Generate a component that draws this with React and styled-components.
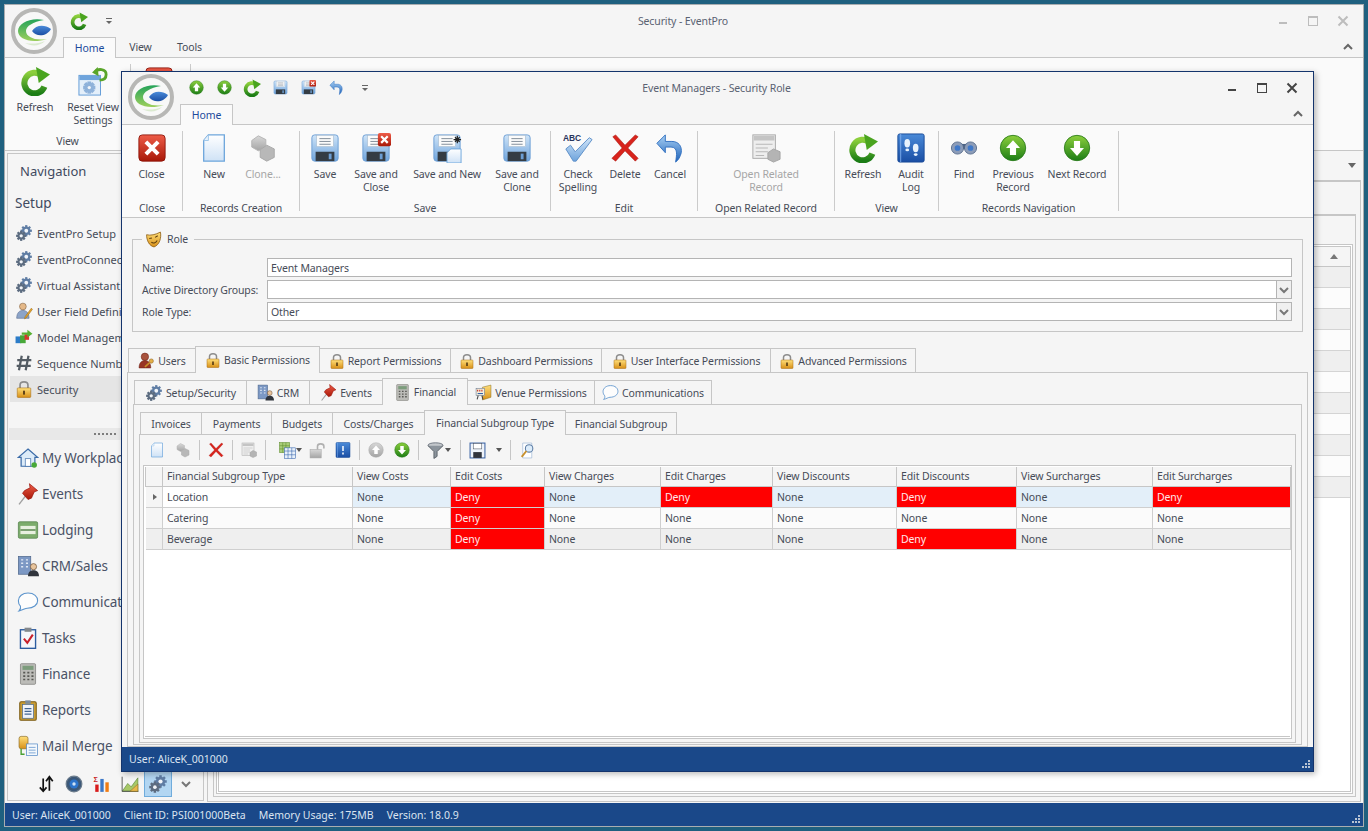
import React from "react";
import styled, { createGlobalStyle } from "styled-components";

const GlobalStyle = createGlobalStyle`
  html, body { margin: 0; padding: 0; height: 100%; overflow: hidden; }
  body { font-family: "Noto Sans", "Liberation Sans", sans-serif; font-size: 10.5px; letter-spacing: -0.12px; color: #474c58; }
  * { box-sizing: border-box; }
`;

/* ---------- icons ---------- */
const IconSvg = styled.svg`
  display: block;
  flex-shrink: 0;
`;

const HiddenDefs = styled.svg`
  position: absolute;
  width: 0;
  height: 0;
`;

const Grad = ({ id, a, b }) => (
  <linearGradient id={id} x1="0" y1="0" x2="0" y2="1">
    <stop offset="0" stopColor={a} />
    <stop offset="1" stopColor={b} />
  </linearGradient>
);

const Defs = () => (
  <HiddenDefs>
    <defs>
      <Grad id="green" a="#8ccf3c" b="#1c7d16" />
      <Grad id="crescent" a="#25a35a" b="#9ccf5c" />
      <Grad id="red" a="#ee5c48" b="#a81808" />
      <Grad id="blue" a="#cfe4f8" b="#6fa4dc" />
      <Grad id="deep" a="#4a8ad8" b="#1a4ea4" />
      <Grad id="undo" a="#a8d0f4" b="#1f62b8" />
      <Grad id="gold" a="#ffdf7a" b="#d89018" />
      <Grad id="gray" a="#d8d8d8" b="#a4a4a4" />
      <Grad id="page" a="#ffffff" b="#cfe2f6" />
    </defs>
  </HiddenDefs>
);

const Ico = ({ s = 16, children }) => (
  <IconSvg width={s} height={s} viewBox="0 0 32 32">{children}</IconSvg>
);

const Logo = () => (
  <IconSvg width="46" height="46" viewBox="0 0 46 46">
    <circle cx="23" cy="23" r="21" fill="#f8f8f8" stroke="#b7b7b5" strokeWidth="4" />
    <path d="M14 35C21 39 29 38 34 33C27 36 20 36 14 35Z" fill="#dbead0" />
    <path d="M33 12C20 9 7 15 7 23C7 31 20 36 36 31C24 33 15 29 15 23C15 18 22 14 33 12Z" fill="url(#crescent)" />
    <path d="M21 23C25 17 33 16 40 21C36 28 26 30 21 23Z" fill="url(#deep)" />
  </IconSvg>
);

const Refresh = ({ s = 30 }) => (
  <Ico s={s}>
    <path d="M23 10A11 11 0 1 0 26 22" fill="none" stroke="url(#green)" strokeWidth="6.500" />
    <path d="M17 1L32 9L20 18Z" fill="#4aa41f" />
  </Ico>
);

const ResetView = () => (
  <Ico s={30}>
    <rect x="1" y="10" width="23" height="21" fill="#e4effa" stroke="#5f9ad6" />
    <rect x="1.500" y="10.500" width="22" height="4.500" fill="#6fa4dc" />
    <Teeth cx={12} cy={23} r={4} c="#8fb2da" />
    <path d="M18 7C21 2 30 3 30 9C30 13 27 15 23 15" fill="none" stroke="#5aa52a" strokeWidth="3" />
    <path d="M21 1L15 7L22 11Z" fill="#5aa52a" />
  </Ico>
);

const RedClose = ({ s = 28 }) => (
  <Ico s={s}>
    <rect x="1" y="1" width="30" height="30" rx="4" fill="url(#red)" stroke="#8c1408" />
    <path d="M9 9L23 23M23 9L9 23" stroke="#fff" strokeWidth="4.600" />
  </Ico>
);

const NewDoc = ({ s = 30 }) => (
  <Ico s={s}>
    <path d="M10 2H27V30H5V8Z" fill="url(#page)" stroke="#6ea6dc" strokeWidth="1.400" />
    <path d="M10 2V8H5" fill="#e8f2fc" stroke="#9cc4e8" />
  </Ico>
);

const Clone = ({ s = 30 }) => (
  <Ico s={s}>
    <path d="M4 8L11 3L19 7V15L11 19L4 15Z" fill="url(#gray)" stroke="#b4b4b4" />
    <path d="M13 18L20 13L28 17V26L20 30L13 26Z" fill="#b8b8b8" stroke="#a8a8a8" />
  </Ico>
);

const Floppy = ({ s = 30, children }) => (
  <Ico s={s}>
    <rect x="2" y="2" width="28" height="28" rx="3" fill="url(#blue)" stroke="#6c9ed4" />
    <rect x="7" y="2.500" width="18" height="12" fill="#fbfbfb" stroke="#a4b8cc" strokeWidth=".6" />
    <path d="M10 6H22M10 9H22M10 12H22" stroke="#7c8894" />
    <rect x="6" y="20" width="20" height="10" fill="#343c44" />
    <rect x="20" y="22" width="3" height="6" fill="#6c9ed4" />
    {children}
  </Ico>
);

const SaveCloseIcon = ({ s = 30 }) => (
  <Floppy s={s}>
    <rect x="18" y="0" width="14" height="14" rx="2" fill="url(#red)" />
    <path d="M21.500 3.500L28.500 10.500M28.500 3.500L21.500 10.500" stroke="#fff" strokeWidth="2.400" />
  </Floppy>
);

const SaveNewIcon = ({ s = 30 }) => (
  <Floppy s={s}>
    <path d="M20 17H31V32H16V21Z" fill="url(#page)" stroke="#6ea6dc" />
    <path d="M27 3V11M23 7H31M24.500 4.500L29.500 9.500M29.500 4.500L24.500 9.500" stroke="#222" strokeWidth="1.300" />
  </Floppy>
);

const Spell = () => (
  <Ico s={30}>
    <text x="0" y="9" fontFamily="Liberation Sans, sans-serif" fontSize="9" fontWeight="700" fill="#28345a">ABC</text>
    <path d="M3 17L8 13L13 20L28 5L31 7L14 30H11Z" fill="url(#blue)" stroke="#5c8ec8" />
  </Ico>
);

const RedX = ({ s = 30 }) => (
  <Ico s={s}>
    <path d="M3 4L6 2L16 13L27 2L30 4L19 16L30 27L27 30L16 19L6 30L2 27L13 16Z" fill="#d8231c" stroke="#a81810" strokeWidth=".6" />
  </Ico>
);

const Undo = ({ s = 30 }) => (
  <Ico s={s}>
    <path d="M11 9H18C25 9 29 14 28 21C27 25 25 29 22 31C23 24 25 15 17 15H11V21L2 11L11 2Z" fill="url(#undo)" stroke="#2f6fc0" />
  </Ico>
);

const RelatedWin = ({ s = 30 }) => (
  <Ico s={s}>
    <rect x="2" y="2" width="24" height="25" fill="#eeeeee" stroke="#a8a8a8" />
    <rect x="3" y="3" width="22" height="5" fill="#c4c4c4" />
    <path d="M5 12H23M5 16H18M5 20H18M5 24H14" stroke="#b4b4b4" />
    <path d="M18 21L24 17L31 20V28L24 31L18 28Z" fill="#b4b4b4" stroke="#a4a4a4" />
  </Ico>
);

const AuditBook = ({ s = 30, mark }) => (
  <Ico s={s}>
    <rect x="2" y="1" width="28" height="30" rx="2" fill="url(#deep)" stroke="#174a98" />
    <path d="M5 1V31" stroke="#7cacec" />
    {mark ? (
      <path d="M16 8V18M16 21V25" stroke="#fff" strokeWidth="3" />
    ) : (
      <g fill="#e8f2fc">
        <ellipse cx="12" cy="11" rx="3" ry="4.500" />
        <ellipse cx="12" cy="18" rx="2" ry="1.500" />
        <ellipse cx="21" cy="16" rx="3" ry="4.500" />
        <ellipse cx="21" cy="23" rx="2" ry="1.500" />
      </g>
    )}
  </Ico>
);

const Binoculars = () => (
  <Ico s={26}>
    <rect x="11" y="11" width="10" height="6" fill="#4c6284" />
    <circle cx="8" cy="16" r="7.500" fill="#8c9cb8" stroke="#4c6284" />
    <circle cx="24" cy="16" r="7.500" fill="#8c9cb8" stroke="#4c6284" />
    <circle cx="8" cy="16" r="3.500" fill="#3f78c8" />
    <circle cx="24" cy="16" r="3.500" fill="#3f78c8" />
  </Ico>
);

const ArrowBall = ({ s = 28, down, off }) => (
  <Ico s={s}>
    <circle cx="16" cy="16" r="14.500" fill={off ? "url(#gray)" : "url(#green)"} stroke={off ? "#aaa" : "#2a7c1a"} />
    <path
      d={down ? "M16 25L24 16H19.500V8H12.500V16H8Z" : "M16 7L24 16H19.500V24H12.500V16H8Z"}
      fill="#fff"
    />
  </Ico>
);

const Mask = () => (
  <Ico s={17}>
    <path d="M3 7C10 9 20 7 29 2C31 12 28 26 17 30C8 28 3 18 3 7Z" fill="url(#gold)" stroke="#8c5c14" strokeWidth="1.500" />
    <path d="M8 14L13 13M19 12L24 9M12 21C15 24 20 23 23 18" fill="none" stroke="#5c3c0c" strokeWidth="2" />
  </Ico>
);

const UserKey = ({ s = 17 }) => (
  <Ico s={s}>
    <circle cx="13" cy="9" r="7" fill="#a8523c" stroke="#6c2014" />
    <path d="M2 30C2 20 7 16 13 16C19 16 24 20 24 30Z" fill="#983424" stroke="#6c2014" />
    <circle cx="25" cy="17" r="4" fill="#e4b048" stroke="#8c5c14" />
    <path d="M22 20L13 28" stroke="#c89028" strokeWidth="3" />
  </Ico>
);

const Lock = ({ s = 16 }) => (
  <Ico s={s}>
    <path d="M9 15V9C9 1.500 23 1.500 23 9V15" fill="none" stroke="#8c8c8c" strokeWidth="3" />
    <rect x="4" y="14" width="24" height="17" rx="1.500" fill="url(#gold)" stroke="#a86c14" />
    <rect x="14.500" y="19" width="3" height="7" fill="#483010" />
  </Ico>
);

const Teeth = ({ cx, cy, r, c }) => (
  <g fill={c}>
    {[0, 45, 90, 135, 180, 225, 270, 315].map((a) => (
      <rect key={a} x={cx - 2} y={cy - r - 2.500} width="4" height="5" transform={`rotate(${a} ${cx} ${cy})`} />
    ))}
    <circle cx={cx} cy={cy} r={r} />
    <circle cx={cx} cy={cy} r={r * 0.45} fill="#f2f5f9" />
  </g>
);

const Gear = ({ s = 18 }) => (
  <Ico s={s}>
    <Teeth cx={20} cy={12} r={7.500} c="#5f7da4" />
    <Teeth cx={11} cy={21} r={6.500} c="#5c6c80" />
  </Ico>
);

const Crm = ({ s = 17 }) => (
  <Ico s={s}>
    <rect x="2" y="2" width="18" height="26" fill="#7c98c4" stroke="#4c6488" />
    <path d="M6 7H9M13 7H16M6 12H9M13 12H16M6 17H9M13 17H16" stroke="#dfe8f4" strokeWidth="2" />
    <circle cx="24" cy="17" r="4.500" fill="#e8c49c" stroke="#6c5038" />
    <path d="M16 31C16 24 20 22 24 22C28 22 32 24 32 31Z" fill="#30343c" />
  </Ico>
);

const Pin = ({ s = 17 }) => (
  <Ico s={s}>
    <path d="M3 31L13 18" stroke="#a0a0a0" strokeWidth="2" />
    <path d="M18 1L30 11L25 13L21 22L16 24L8 15L11 11L19 7Z" fill="url(#red)" stroke="#98140c" />
  </Ico>
);

const Calc = ({ s = 17 }) => (
  <Ico s={s}>
    <rect x="5" y="1" width="22" height="30" rx="1.500" fill="#bcbcb8" stroke="#787874" />
    <rect x="8" y="4" width="16" height="6" fill="#7c9c7c" />
    <path d="M9 14H12M15 14H18M21 14H24M9 19H12M15 19H18M21 19H24M9 24H12M15 24H18M21 24H24" stroke="#585854" strokeWidth="2.500" />
  </Ico>
);

const Venue = () => (
  <Ico s={17}>
    <path d="M14 6L30 2V25L14 30Z" fill="url(#gold)" stroke="#8c7428" />
    <rect x="2" y="8" width="16" height="14" fill="#f4f0dc" stroke="#5c6c88" />
    <path d="M5 11V14M9 11V14M13 11V14" stroke="#c8281c" strokeWidth="2" />
    <path d="M5 18H15" stroke="#2c5cac" strokeWidth="2" />
    <path d="M6 22L4 29M13 22L15 29" stroke="#444" strokeWidth="2" />
  </Ico>
);

const Bubble = ({ s = 17 }) => (
  <Ico s={s}>
    <path d="M16 3C25 3 30 8 30 14C30 20 24 25 15 25C12 25 8 28 3 29C5 27 6 25 5 22C3 20 2 17 2 14C2 8 8 3 16 3Z" fill="#fdfdfd" stroke="#5c94cc" strokeWidth="1.600" />
  </Ico>
);

const GridIcon = () => (
  <Ico s={17}>
    <rect x="1" y="1" width="19" height="19" fill="#a8cc78" stroke="#5c8c2c" />
    <path d="M1 7H20M1 13H20M7 1V20M13 1V20" stroke="#5c8c2c" />
    <rect x="10" y="11" width="21" height="20" fill="#e8f0fa" stroke="#2c5ca8" />
    <path d="M10 17H31M10 24H31M17 11V31M24 11V31" stroke="#2c5ca8" />
  </Ico>
);

const Unlock = () => (
  <Ico s={17}>
    <rect x="2" y="14" width="21" height="16" fill="url(#gray)" stroke="#a8a8a8" />
    <path d="M16 14V8C16 2 28 2 28 8V12" fill="none" stroke="#b0b0b0" strokeWidth="3" />
  </Ico>
);

const Funnel = () => (
  <Ico s={17}>
    <ellipse cx="16" cy="6" rx="14" ry="4.500" fill="#c4c8cc" stroke="#5c6470" strokeWidth="1.500" />
    <path d="M2 7L13 18V31L19 27V18L30 7" fill="#8c949c" stroke="#4c545c" strokeWidth="1.500" />
  </Ico>
);

const OutlineFloppy = () => (
  <Ico s={17}>
    <rect x="2" y="2" width="28" height="28" fill="#eef3fa" stroke="#3c64a4" strokeWidth="2" />
    <rect x="8" y="3" width="16" height="10" fill="#fff" stroke="#48505c" />
    <rect x="8" y="19" width="16" height="11" fill="#30343c" />
  </Ico>
);

const DocSearch = () => (
  <Ico s={17}>
    <path d="M7 2H24V30H7Z" fill="#fff" stroke="#84a4cc" />
    <circle cx="19" cy="12" r="7" fill="#dcecfa" stroke="#5c7ca4" strokeWidth="2" />
    <path d="M14 17L5 28" stroke="#c8902c" strokeWidth="3.500" />
  </Ico>
);

const Person = () => (
  <Ico s={18}>
    <circle cx="14" cy="8" r="6" fill="#e4b888" stroke="#7c5c3c" />
    <path d="M3 29C3 19 8 15 14 15C20 15 25 19 25 29Z" fill="#8ca4c8" stroke="#54688c" />
    <path d="M31 13L20 28L17 30L18 26L29 11Z" fill="#e8a428" stroke="#9c6c18" />
  </Ico>
);

const Model = () => (
  <Ico s={18}>
    <rect x="1" y="15" width="10" height="12" fill="#2c7cc8" />
    <rect x="9" y="13" width="10" height="14" fill="#48a838" />
    <rect x="17" y="11" width="8" height="10" fill="#d8342c" />
    <path d="M12 8H22V3L31 10L22 17V12H12Z" fill="#58b030" />
  </Ico>
);

const Hash = () => (
  <Ico s={18}>
    <path d="M12 3L7 29M24 3L19 29M4 11H29M3 21H28" stroke="#545c64" strokeWidth="4" />
  </Ico>
);

const House = () => (
  <Ico s={22}>
    <path d="M16 3L30 15H26V28H6V15H2Z" fill="#dcebf8" stroke="#3c6ca8" strokeWidth="1.800" />
    <rect x="12" y="17" width="8" height="11" fill="#fff" stroke="#3c6ca8" />
    <circle cx="25" cy="26" r="4" fill="#48a838" />
  </Ico>
);

const Bed = () => (
  <Ico s={22}>
    <rect x="2" y="4" width="28" height="24" rx="2" fill="#7cac6c" stroke="#4c7c44" />
    <rect x="5" y="10" width="22" height="12" fill="#e8f0e0" />
    <path d="M5 16H27" stroke="#4c7c44" strokeWidth="2" />
  </Ico>
);

const Tasks = () => (
  <Ico s={22}>
    <rect x="5" y="4" width="22" height="27" fill="#f4f6fa" stroke="#2c5ca0" strokeWidth="2" />
    <rect x="11" y="1" width="10" height="6" fill="#84888c" />
    <path d="M10 17L15 23L23 11" fill="none" stroke="#c8202c" strokeWidth="3" />
  </Ico>
);

const Report = () => (
  <Ico s={22}>
    <rect x="4" y="4" width="24" height="27" rx="2" fill="#c89c34" stroke="#7c5c14" strokeWidth="1.500" />
    <rect x="8" y="8" width="16" height="20" fill="#f0f4fa" stroke="#446894" />
    <rect x="12" y="2" width="8" height="5" fill="#7c8c9c" />
    <path d="M11 14H21M11 18H21M11 22H21" stroke="#446894" strokeWidth="1.500" />
  </Ico>
);

const MailMerge = () => (
  <Ico s={22}>
    <rect x="3" y="2" width="13" height="18" rx="3" fill="url(#gold)" stroke="#8c6c24" />
    <rect x="14" y="13" width="16" height="17" fill="#f4f8fc" stroke="#4c84c4" />
    <path d="M17 18H27M17 22H27M17 26H27" stroke="#4c84c4" />
    <path d="M6 20V28H11" fill="none" stroke="#48a030" strokeWidth="2" />
  </Ico>
);

const Arrows = () => (
  <Ico s={18}>
    <path d="M11 6V28M5 22L11 29L17 22M22 28V5M16 11L22 3L28 11" fill="none" stroke="#111" strokeWidth="3" />
  </Ico>
);

const Orb = () => (
  <Ico s={18}>
    <circle cx="16" cy="16" r="14" fill="#3c5878" stroke="#6c7c8c" strokeWidth="2" />
    <circle cx="16" cy="16" r="8" fill="#2c74cc" />
    <circle cx="16" cy="16" r="3" fill="#cfe2f6" />
  </Ico>
);

const Bars = () => (
  <Ico s={18}>
    <text x="1" y="12" fontFamily="Liberation Sans, sans-serif" fontSize="13" fontWeight="700" fill="#c81c1c">Σ</text>
    <rect x="4" y="17" width="6" height="13" fill="#d81c1c" />
    <rect x="13" y="7" width="6" height="23" fill="#3c78c8" />
    <rect x="22" y="13" width="6" height="17" fill="#f07c14" />
  </Ico>
);

const ChartArea = () => (
  <Ico s={18}>
    <path d="M2 29L12 15L18 21L30 5V29Z" fill="#a8c868" stroke="#4c7c2c" />
    <path d="M2 29V3M2 29H31" stroke="#444" strokeWidth="1.500" />
    <path d="M16 29L30 16V29Z" fill="#e8b84c" stroke="#8c6c24" />
  </Ico>
);

const Chevron = ({ up, c = "#666", s = 10 }) => (
  <IconSvg width={s} height={s} viewBox="0 0 10 10">
    <path d={up ? "M1 7L5 3L9 7" : "M1 3L5 7L9 3"} fill="none" stroke={c} strokeWidth="2" />
  </IconSvg>
);

const WinMin = ({ c }) => (
  <IconSvg width="12" height="12" viewBox="0 0 12 12"><rect x="2" y="7" width="8" height="2" fill={c} /></IconSvg>
);
const WinMax = ({ c }) => (
  <IconSvg width="12" height="12" viewBox="0 0 12 12">
    <rect x="1.500" y="1.500" width="9" height="9" fill="none" stroke={c} />
    <rect x="1" y="1" width="10" height="2" fill={c} />
  </IconSvg>
);
const WinClose = ({ c }) => (
  <IconSvg width="12" height="12" viewBox="0 0 12 12">
    <path d="M1.500 1.500L10.500 10.500M10.500 1.500L1.500 10.500" stroke={c} strokeWidth="2" />
  </IconSvg>
);

const Grip = () => (
  <IconSvg width="9" height="9" viewBox="0 0 9 9">
    <path d="M7 0h2v2H7zM4 3h2v2H4zM7 3h2v2H7zM1 6h2v2H1zM4 6h2v2H4zM7 6h2v2H7z" fill="#b8c4d4" />
  </IconSvg>
);

/* ---------- window chrome ---------- */
const Desktop = styled.div`
  width: 1368px;
  height: 831px;
  padding: 4px;
  background: #1f607f;
`;

const MainWindow = styled.div`
  position: relative;
  display: flex;
  flex-direction: column;
  height: 823px;
  background: #f5f5f5;
  border: 1px solid #a9adb0;
  border-bottom-width: 1px;
`;

const ChildWindow = styled.div`
  position: absolute;
  left: 116px;
  top: 66px;
  width: 1193px;
  height: 701px;
  display: flex;
  flex-direction: column;
  background: #f5f5f5;
  border: 1px solid #14346c;
  box-shadow: 2px 2px 6px rgba(0, 0, 0, 0.28);
`;

const Header = styled.header`
  display: flex;
  height: 53px;
  flex-shrink: 0;
  border-bottom: 1px solid #c6c6c6;
`;

const LogoSlot = styled.div`
  width: ${(p) => p.$w}px;
  padding: ${(p) => p.$top}px 0 0 6px;
  flex-shrink: 0;
`;

const HeaderMain = styled.div`
  flex: 1;
  display: flex;
  flex-direction: column;
  min-width: 0;
`;

const TitleRow = styled.div`
  flex: 1;
  display: flex;
  align-items: center;
`;

const Qat = styled.div`
  display: flex;
  align-items: center;
  width: ${(p) => p.$w}px;
  padding-left: 2px;
`;

const QatCell = styled.div`
  width: 28px;
  display: flex;
  justify-content: center;
`;

const QatDrop = styled.div`
  margin-left: ${(p) => p.$m}px;
  width: 6px;
  height: 6px;
  border-top: 1px solid #666;
  display: flex;
  justify-content: center;
  padding-top: 2px;
  &::after {
    content: "";
    border: 3px solid transparent;
    border-top: 3px solid #666;
    border-bottom: 0;
  }
`;

const Title = styled.div`
  flex: 1;
  text-align: center;
  padding-right: ${(p) => p.$shift}px;
  color: #5a6272;
`;

const WinButtons = styled.div`
  display: flex;
  width: 100px;
  padding-left: ${(p) => p.$pad}px;
  gap: 18px;
`;

const TabRow = styled.div`
  height: 21px;
  display: flex;
  align-items: flex-end;
`;

const RibbonTab = styled.div`
  width: ${(p) => p.$w}px;
  height: 21px;
  margin-bottom: -1px;
  padding-bottom: 1px;
  display: flex;
  align-items: center;
  justify-content: center;
  color: ${(p) => (p.$active ? "#1c4a9c" : "#474c58")};
  background: ${(p) => (p.$active ? "#fafafa" : "transparent")};
  border: 1px solid ${(p) => (p.$active ? "#c6c6c6" : "transparent")};
  border-bottom: ${(p) => (p.$active ? "0" : "1px solid transparent")};
`;

const Collapse = styled.div`
  margin: 0 ${(p) => p.$r}px 5px auto;
`;

const Ribbon = styled.div`
  display: flex;
  height: 93px;
  flex-shrink: 0;
  background: #fafafa;
  padding-top: 6px;
  border-bottom: 1px solid #c6c6c6;
`;

const Group = styled.section`
  width: ${(p) => p.$w}px;
  height: 80px;
  flex-shrink: 0;
  display: flex;
  flex-direction: column;
  padding-left: ${(p) => p.$pad || 0}px;
  border-right: 1px solid #cbcbcb;
`;

const GroupItems = styled.div`
  flex: 1;
  display: flex;
`;

const GroupLabel = styled.div`
  height: 16px;
  margin: 0 0 -5px -${(p) => p.$pad || 0}px;
  text-align: center;
  line-height: 16px;
  color: #474c58;
`;

const BigButton = styled.div`
  width: ${(p) => p.$w}px;
  display: flex;
  flex-direction: column;
  align-items: center;
  color: ${(p) => (p.$off ? "#a6a6a6" : "#474c58")};
`;

const BigIcon = styled.div`
  height: 30px;
  margin-top: 2px;
  display: flex;
  align-items: center;
  justify-content: center;
`;

const BigLabel = styled.div`
  margin-top: 5px;
  line-height: 13px;
  text-align: center;
  white-space: pre-line;
`;

/* ---------- main window body ---------- */
const Body = styled.div`
  flex: 1;
  min-height: 0;
  display: flex;
`;

const Nav = styled.nav`
  width: 197px;
  margin: 2px 0 2px 2px;
  flex-shrink: 0;
  display: flex;
  flex-direction: column;
  border: 1px solid #c6c6c6;
  overflow: hidden;
`;

const NavHead = styled.div`
  height: 33px;
  padding-left: 12px;
  display: flex;
  align-items: center;
  font-size: 13px;
  letter-spacing: 0;
  color: #3f4a60;
`;

const NavSub = styled.div`
  height: 33px;
  padding: 0 0 1px 7px;
  display: flex;
  align-items: center;
  font-size: 13.5px;
  letter-spacing: 0;
  color: #3f4a60;
`;

const NavList = styled.div`
  padding-left: 2px;
`;

const NavRow = styled.div`
  height: 26px;
  display: flex;
  align-items: center;
  gap: 4px;
  padding-left: 5px;
  white-space: nowrap;
  letter-spacing: 0;
  font-size: 11px;
  background: ${(p) => (p.$active ? "#e5e5e5" : "transparent")};
`;

const Splitter = styled.div`
  height: 12px;
  margin: 26px 0 0 1px;
  background: #e8e8e8;
  display: flex;
  align-items: center;
  justify-content: flex-end;
  padding-right: 87px;
  &::after {
    content: "";
    width: 22px;
    border-top: 2px dotted #7c7c7c;
  }
`;

const BigNavRow = styled.div`
  height: 36px;
  display: flex;
  align-items: center;
  gap: 3px;
  padding-left: 9px;
  white-space: nowrap;
  font-size: 13.5px;
  letter-spacing: -0.1px;
  color: #4a5266;
`;

const NavTools = styled.div`
  display: flex;
  align-items: center;
  height: 27px;
  margin-top: 6px;
  padding-left: 24px;
`;

const NavTool = styled.div`
  width: 28px;
  height: 27px;
  display: flex;
  align-items: center;
  justify-content: center;
  background: ${(p) => (p.$active ? "#b2d6f2" : "transparent")};
  border: 1px solid ${(p) => (p.$active ? "#70acdc" : "transparent")};
`;

const Content = styled.main`
  flex: 1;
  min-width: 0;
  display: flex;
  flex-direction: column;
  margin: 0 2px 1px 3px;
`;

const ContentHead = styled.div`
  height: 29px;
  flex-shrink: 0;
  display: flex;
  align-items: center;
  justify-content: flex-end;
  padding-right: 5px;
  &::after {
    content: "";
    border: 4px solid transparent;
    border-top: 5px solid #666;
    border-bottom: 0;
  }
`;

const Frame = styled.div`
  flex: 1;
  min-height: 0;
  display: flex;
  flex-direction: column;
  border: 1px solid #c6c6c6;
  border-top-width: 2px;
  padding: ${(p) => p.$top}px ${(p) => p.$side}px ${(p) => p.$side}px ${(p) => p.$left}px;
  background: #f5f5f5;
`;

const BackGridOuter = styled.div`
  flex: 1;
  padding: 1px;
  background: #fff;
  border: 1px solid #c6c6c6;
`;

const BackGrid = styled.div`
  height: 100%;
  background: #fff;
  border: 1px solid #c6c6c6;
`;

const BackHead = styled.div`
  height: 20px;
  display: flex;
  align-items: center;
  justify-content: flex-end;
  padding-right: 12px;
  background: #f5f5f5;
  border-bottom: 1px solid #c6c6c6;
  &::after {
    content: "";
    border: 4px solid transparent;
    border-bottom: 5px solid #777;
    border-top: 0;
  }
`;

const BackRow = styled.div`
  height: 21px;
  background: ${(p) => (p.$odd ? "#efefef" : "#fcfcfc")};
  border-bottom: 1px solid #d4d4d4;
`;

const StatusBar = styled.footer`
  height: ${(p) => p.$h}px;
  flex-shrink: 0;
  display: flex;
  align-items: center;
  gap: 13px;
  padding: 0 3px 0 7px;
  background: #1a4889;
  color: #dbe4f0;
  letter-spacing: 0;
`;

const GripSlot = styled.div`
  margin: auto 0 2px auto;
`;

/* ---------- child window body ---------- */
const ChildBody = styled.div`
  flex: 1;
  min-height: 0;
  display: flex;
  flex-direction: column;
  padding-top: 13px;
`;

const RoleSet = styled.fieldset`
  margin: 0 10px;
  padding: 11px 10px 10px 9px;
  border: 1px solid #c6c6c6;
  min-width: 0;
`;

const RoleLegend = styled.legend`
  display: flex;
  align-items: center;
  gap: 5px;
  height: 16px;
  padding: 0 6px 0 3px;
`;

const Form = styled.div`
  display: grid;
  grid-template-columns: 125px 1fr;
  row-gap: 3px;
  align-items: center;
`;

const FieldLabel = styled.span`
  white-space: nowrap;
`;

const FieldBox = styled.div`
  height: 19px;
  display: flex;
  align-items: center;
  padding-left: 3px;
  background: #fff;
  border: 1px solid #b4b4b4;
`;

const FieldDrop = styled.div`
  margin-left: auto;
  width: 15px;
  height: 17px;
  display: flex;
  align-items: center;
  justify-content: center;
  background: #f0f0f0;
  border-left: 1px solid #b4b4b4;
`;

const TabStrip = styled.div`
  display: flex;
  align-items: flex-end;
  height: ${(p) => p.$h}px;
  margin-top: ${(p) => p.$top}px;
  padding-left: ${(p) => p.$left}px;
  flex-shrink: 0;
  position: relative;
  z-index: 1;
`;

const PageTab = styled.div`
  width: ${(p) => p.$w}px;
  height: ${(p) => (p.$active ? p.$h : p.$h - 2)}px;
  display: flex;
  align-items: center;
  justify-content: center;
  gap: 3px;
  white-space: nowrap;
  margin-right: -1px;
  background: #f5f5f5;
  border: 1px solid #c6c6c6;
  border-bottom: ${(p) => (p.$active ? "0" : "1px solid #c6c6c6")};
`;

const TabPanel = styled.div`
  flex: 1;
  min-height: 0;
  display: flex;
  flex-direction: column;
  margin: -1px ${(p) => p.$side}px ${(p) => p.$bottom}px;
  border: 1px solid #c6c6c6;
  padding: ${(p) => p.$pad || 0};
`;

const Toolbar = styled.div`
  height: 30px;
  flex-shrink: 0;
  display: flex;
  align-items: center;
  padding-left: 4px;
`;

const ToolCell = styled.div`
  width: ${(p) => p.$w || 26}px;
  padding-left: ${(p) => p.$pad ?? 5}px;
  display: flex;
  align-items: center;
`;

const ToolSep = styled.div`
  width: 1px;
  height: 20px;
  margin: 0 3px;
  background: #c6c6c6;
`;

const Caret = styled.span`
  margin-left: ${(p) => p.$m || 0}px;
  border: 3px solid transparent;
  border-top: 4px solid #555;
  border-bottom: 0;
`;

const GridFrame = styled.div`
  flex: 1;
  min-height: 0;
  margin: 0 3px 3px;
  padding: 1px;
  border: 1px solid #c6c6c6;
  background: #fff;
`;

const GridInner = styled.div`
  height: 100%;
  background: #fff;
  border-bottom: 1px solid #c6c6c6;
`;

const Table = styled.table`
  table-layout: fixed;
  width: 1145px;
  border-collapse: collapse;
  font-size: 10.5px;
`;

const Th = styled.th`
  height: 19px;
  padding: 0 4px;
  font-weight: 400;
  text-align: left;
  color: #474c58;
  background: #f5f5f5;
  border: 1px solid #c6c6c6;
  border-top: 0;
`;

const cellBg = (p) => {
  if (p.$deny) return "#ff0000";
  if (p.$rowIndex === 0) return p.$first ? "#ffffff" : "#e3eff9";
  return p.$rowIndex === 2 ? "#efefef" : "#fbfbfb";
};

const Td = styled.td`
  height: 21px;
  padding: 0 4px;
  color: ${(p) => (p.$deny ? "#ffe8e8" : "#474c58")};
  background: ${cellBg};
  border: 1px solid #cfcfcf;
  white-space: nowrap;
`;

const RowMark = styled.td`
  height: 21px;
  padding-left: 7px;
  background: ${(p) => (p.$rowIndex === 2 ? "#efefef" : "#f5f5f5")};
  border: 1px solid #cfcfcf;
  border-left: 0;
`;

const Triangle = styled.div`
  width: 0;
  border: 3px solid transparent;
  border-left: 4px solid #666;
  border-right: 0;
`;

/* ---------- data ---------- */
const setupItems = [
  [<Gear key="g" />, "EventPro Setup"],
  [<Gear key="g" />, "EventProConnect"],
  [<Gear key="g" />, "Virtual Assistant Setup"],
  [<Person key="g" />, "User Field Definitions"],
  [<Model key="g" />, "Model Management"],
  [<Hash key="g" />, "Sequence Numbers"],
  [<Lock key="g" s={18} />, "Security"],
];

const bigItems = [
  [<House key="i" />, "My Workplace"],
  [<Pin key="i" s={22} />, "Events"],
  [<Bed key="i" />, "Lodging"],
  [<Crm key="i" s={22} />, "CRM/Sales"],
  [<Bubble key="i" s={22} />, "Communications"],
  [<Tasks key="i" />, "Tasks"],
  [<Calc key="i" s={22} />, "Finance"],
  [<Report key="i" />, "Reports"],
  [<MailMerge key="i" />, "Mail Merge"],
];

const ribbonGroups = [
  { label: "Close", w: 61, items: [[59, <RedClose key="i" />, "Close"]] },
  {
    label: "Records Creation", w: 117, pad: 7,
    items: [[48, <NewDoc key="i" />, "New"], [50, <Clone key="i" />, "Clone...", true]],
  },
  {
    label: "Save", w: 251, pad: 5,
    items: [
      [40, <Floppy key="i" />, "Save"],
      [62, <SaveCloseIcon key="i" />, "Save and\nClose"],
      [80, <SaveNewIcon key="i" />, "Save and New"],
      [60, <Floppy key="i" />, "Save and\nClone"],
    ],
  },
  {
    label: "Edit", w: 147,
    items: [[54, <Spell key="i" />, "Check\nSpelling"], [40, <RedX key="i" />, "Delete"], [50, <Undo key="i" />, "Cancel"]],
  },
  { label: "Open Related Record", w: 137, items: [[136, <RelatedWin key="i" />, "Open Related\nRecord", true]] },
  {
    label: "View", w: 104, pad: 5,
    items: [[46, <Refresh key="i" />, "Refresh"], [50, <AuditBook key="i" />, "Audit\nLog"]],
  },
  {
    label: "Records Navigation", w: 180, pad: 5,
    items: [
      [40, <Binoculars key="i" />, "Find"],
      [58, <ArrowBall key="i" />, "Previous\nRecord"],
      [70, <ArrowBall key="i" down />, "Next Record"],
    ],
  },
];

const permTabs = [
  [68, <UserKey key="i" />, "Users"],
  [125, <Lock key="i" />, "Basic Permissions", true],
  [132, <Lock key="i" />, "Report Permissions"],
  [152, <Lock key="i" />, "Dashboard Permissions"],
  [170, <Lock key="i" />, "User Interface Permissions"],
  [146, <Lock key="i" />, "Advanced Permissions"],
];

const areaTabs = [
  [113, <Gear key="i" />, "Setup/Security"],
  [64, <Crm key="i" />, "CRM"],
  [74, <Pin key="i" />, "Events"],
  [86, <Calc key="i" />, "Financial", true],
  [128, <Venue key="i" />, "Venue Permissions"],
  [118, <Bubble key="i" />, "Communications"],
];

const subTabs = [
  [62, "Invoices"],
  [71, "Payments"],
  [62, "Budgets"],
  [93, "Costs/Charges"],
  [142, "Financial Subgroup Type", true],
  [112, "Financial Subgroup"],
];

const columns = [
  ["Financial Subgroup Type", 190],
  ["View Costs", 98],
  ["Edit Costs", 94],
  ["View Charges", 116],
  ["Edit Charges", 112],
  ["View Discounts", 124],
  ["Edit Discounts", 120],
  ["View Surcharges", 136],
  ["Edit Surcharges", 138],
];

const rows = [
  ["Location", "None", "Deny", "None", "Deny", "None", "Deny", "None", "Deny"],
  ["Catering", "None", "Deny", "None", "None", "None", "None", "None", "None"],
  ["Beverage", "None", "Deny", "None", "None", "None", "Deny", "None", "None"],
];

const WindowControls = ({ c, pad }) => (
  <WinButtons $pad={pad}>
    <WinMin c={c} />
    <WinMax c={c} />
    <WinClose c={c} />
  </WinButtons>
);

const Security = () => (
  <ChildWindow>
    <Header>
      <LogoSlot $w={58} $top={2}><Logo /></LogoSlot>
      <HeaderMain>
        <TitleRow>
          <Qat $w={200}>
            <QatCell><ArrowBall s={15} /></QatCell>
            <QatCell><ArrowBall s={15} down /></QatCell>
            <QatCell><Refresh s={18} /></QatCell>
            <QatCell><Floppy s={15} /></QatCell>
            <QatCell><SaveCloseIcon s={15} /></QatCell>
            <QatCell><Undo s={15} /></QatCell>
            <QatDrop $m={12} />
          </Qat>
          <Title $shift={160}>Event Managers - Security Role</Title>
          <WindowControls c="#444" pad={13} />
        </TitleRow>
        <TabRow>
          <RibbonTab $w={53} $active>Home</RibbonTab>
          <Collapse $r={10}><Chevron up /></Collapse>
        </TabRow>
      </HeaderMain>
    </Header>

    <Ribbon>
      {ribbonGroups.map((g) => (
        <Group key={g.label} $w={g.w} $pad={g.pad}>
          <GroupItems>
            {g.items.map(([w, icon, label, off]) => (
              <BigButton key={label} $w={w} $off={off}>
                <BigIcon>{icon}</BigIcon>
                <BigLabel>{label}</BigLabel>
              </BigButton>
            ))}
          </GroupItems>
          <GroupLabel $pad={g.pad}>{g.label}</GroupLabel>
        </Group>
      ))}
    </Ribbon>

    <ChildBody>
      <RoleSet>
        <RoleLegend><Mask />Role</RoleLegend>
        <Form>
          <FieldLabel>Name:</FieldLabel>
          <FieldBox>Event Managers</FieldBox>
          <FieldLabel>Active Directory Groups:</FieldLabel>
          <FieldBox><FieldDrop><Chevron c="#777" /></FieldDrop></FieldBox>
          <FieldLabel>Role Type:</FieldLabel>
          <FieldBox>Other<FieldDrop><Chevron c="#777" /></FieldDrop></FieldBox>
        </Form>
      </RoleSet>

      <TabStrip $h={27} $top={14} $left={6}>
        {permTabs.map(([w, icon, label, active]) => (
          <PageTab key={label} $w={w} $h={27} $active={active}>{icon}{label}</PageTab>
        ))}
      </TabStrip>
      <TabPanel $side={5} $bottom={0} $pad="5px 5px 0">
        <TabStrip $h={27} $top={0} $left={1}>
          {areaTabs.map(([w, icon, label, active]) => (
            <PageTab key={label} $w={w} $h={27} $active={active}>{icon}{label}</PageTab>
          ))}
        </TabStrip>
        <TabPanel $side={0} $bottom={1} $pad="5px 5px 0">
          <TabStrip $h={25} $top={0} $left={1}>
            {subTabs.map(([w, label, active]) => (
              <PageTab key={label} $w={w} $h={25} $active={active}>{label}</PageTab>
            ))}
          </TabStrip>
          <TabPanel $side={0} $bottom={1}>
            <Toolbar>
              <ToolCell><NewDoc s={16} /></ToolCell>
              <ToolCell><Clone s={16} /></ToolCell>
              <ToolSep />
              <ToolCell><RedX s={16} /></ToolCell>
              <ToolSep />
              <ToolCell><RelatedWin s={16} /></ToolCell>
              <ToolSep />
              <ToolCell $w={35} $pad={10}><GridIcon /><Caret /></ToolCell>
              <ToolCell><Unlock /></ToolCell>
              <ToolCell><AuditBook s={16} mark /></ToolCell>
              <ToolSep />
              <ToolCell><ArrowBall s={16} off /></ToolCell>
              <ToolCell><ArrowBall s={16} down /></ToolCell>
              <ToolSep />
              <ToolCell $w={35}><Funnel /><Caret $m={1} /></ToolCell>
              <ToolSep />
              <ToolCell $w={43}><OutlineFloppy /><Caret $m={10} /></ToolCell>
              <ToolSep />
              <ToolCell><DocSearch /></ToolCell>
            </Toolbar>
            <GridFrame>
              <GridInner>
                <Table>
                  <colgroup>
                    <col width="17" />
                    {columns.map(([name, w]) => <col key={name} width={w} />)}
                  </colgroup>
                  <thead>
                    <tr>
                      <Th />
                      {columns.map(([name]) => <Th key={name}>{name}</Th>)}
                    </tr>
                  </thead>
                  <tbody>
                    {rows.map((row, i) => (
                      <tr key={row[0]}>
                        <RowMark $rowIndex={i}>{i === 0 && <Triangle />}</RowMark>
                        {row.map((value, j) => (
                          <Td key={columns[j][0]} $rowIndex={i} $first={j === 0} $deny={value === "Deny"}>{value}</Td>
                        ))}
                      </tr>
                    ))}
                  </tbody>
                </Table>
              </GridInner>
            </GridFrame>
          </TabPanel>
        </TabPanel>
      </TabPanel>
    </ChildBody>

    <StatusBar $h={24}>
      User: AliceK_001000
      <GripSlot><Grip /></GripSlot>
    </StatusBar>
  </ChildWindow>
);

export default function App() {
  return (
    <Desktop>
      <GlobalStyle />
      <Defs />
      <MainWindow>
        <Header>
          <LogoSlot $w={58} $top={3}><Logo /></LogoSlot>
          <HeaderMain>
            <TitleRow>
              <Qat $w={60}>
                <QatCell><Refresh s={18} /></QatCell>
                <QatDrop $m={13} />
              </Qat>
              <Title $shift={20}>Security - EventPro</Title>
              <WindowControls c="#bdbdbd" pad={14} />
            </TitleRow>
            <TabRow>
              <RibbonTab $w={53} $active>Home</RibbonTab>
              <RibbonTab $w={49}>View</RibbonTab>
              <RibbonTab $w={49}>Tools</RibbonTab>
              <Collapse $r={10}><Chevron up /></Collapse>
            </TabRow>
          </HeaderMain>
        </Header>

        <Ribbon>
          <Group $w={126} $pad={1}>
            <GroupItems>
              <BigButton $w={58}><BigIcon><Refresh /></BigIcon><BigLabel>Refresh</BigLabel></BigButton>
              <BigButton $w={58}><BigIcon><ResetView /></BigIcon><BigLabel>{"Reset View\nSettings"}</BigLabel></BigButton>
            </GroupItems>
            <GroupLabel $pad={1}>View</GroupLabel>
          </Group>
          <Group $w={60} $pad={14}>
            <GroupItems><BigIcon><RedClose /></BigIcon></GroupItems>
          </Group>
        </Ribbon>

        <Body>
          <Nav>
            <NavHead>Navigation</NavHead>
            <NavSub>Setup</NavSub>
            <NavList>
              {setupItems.map(([icon, label], i) => (
                <NavRow key={label} $active={i === setupItems.length - 1}>{icon}{label}</NavRow>
              ))}
            </NavList>
            <Splitter />
            {bigItems.map(([icon, label]) => (
              <BigNavRow key={label}>{icon}{label}</BigNavRow>
            ))}
            <NavTools>
              <NavTool><Arrows /></NavTool>
              <NavTool><Orb /></NavTool>
              <NavTool><Bars /></NavTool>
              <NavTool><ChartArea /></NavTool>
              <NavTool $active><Gear s={20} /></NavTool>
              <NavTool><Chevron c="#777" /></NavTool>
            </NavTools>
          </Nav>

          <Content>
            <ContentHead />
            <Frame $top={32} $side={4} $left={5}>
              <Frame $top={28} $side={2} $left={2}>
                <BackGridOuter>
                  <BackGrid>
                    <BackHead />
                    {Array.from({ length: 11 }, (_, i) => <BackRow key={i} $odd={i % 2 === 0} />)}
                  </BackGrid>
                </BackGridOuter>
              </Frame>
            </Frame>
          </Content>
        </Body>

        <StatusBar $h={23}>
          <span>User: AliceK_001000</span>
          <span>Client ID: PSI001000Beta</span>
          <span>Memory Usage: 175MB</span>
          <span>Version: 18.0.9</span>
          <GripSlot><Grip /></GripSlot>
        </StatusBar>

        <Security />
      </MainWindow>
    </Desktop>
  );
}
